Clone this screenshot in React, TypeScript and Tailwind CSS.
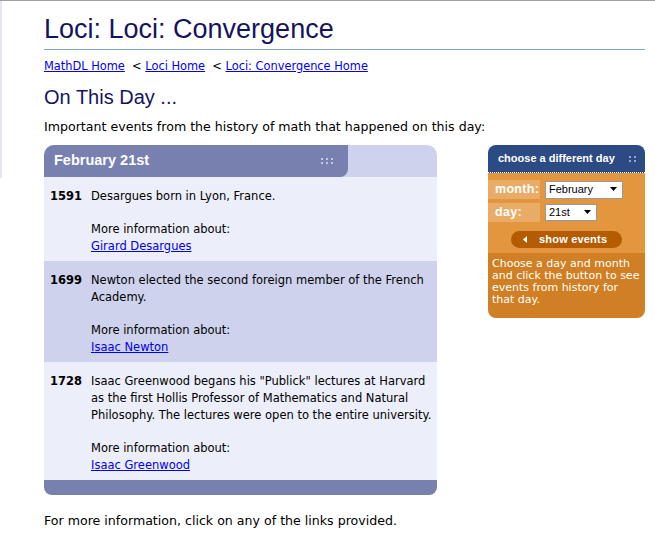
import React from "react";

const body = { fontFamily: '"DejaVu Sans", Verdana, sans-serif' };
const arial = { fontFamily: '"Liberation Sans", Arial, sans-serif' };

function Grip({ color, cols }: { color: string; cols: number[] }) {
  const w = cols[cols.length - 1] + 3;
  return (
    <svg width={w} height="8" viewBox={`0 0 ${w} 8`}>
      {cols.map((x) =>
        [1, 5].map((y) => <rect key={x + "-" + y} x={x} y={y} width="2" height="2" fill={color} />)
      )}
    </svg>
  );
}

type Ev = { year: string; text: string; link: string; dark: boolean };
const events: Ev[] = [
  { year: "1591", text: "Desargues born in Lyon, France.", link: "Girard Desargues", dark: false },
  { year: "1699", text: "Newton elected the second foreign member of the French Academy.", link: "Isaac Newton", dark: true },
  {
    year: "1728",
    text: 'Isaac Greenwood begans his "Publick" lectures at Harvard as the first Hollis Professor of Mathematics and Natural Philosophy. The lectures were open to the entire university.',
    link: "Isaac Greenwood",
    dark: false,
  },
];

export default function App() {
  return (
    <div className="w-[655px] h-[545px] bg-white border-t border-[#a0a0a0] relative overflow-hidden">
      <div className="absolute left-0 top-0 w-[2px] h-[177px] bg-[#e4e6f6]" />
      <div className="pl-[44px] pr-[10px]">
        <h1
          className="text-[27px] leading-[32px] text-[#14145e] pt-[12px] pb-[4px] border-b border-[#7ea4c8]"
          style={arial}
        >
          Loci: Loci: Convergence
        </h1>
        <div className="text-[11.4px] leading-[14px] mt-[9px] text-black" style={body}>
          <a className="text-[#0000ee] underline" href="#">MathDL Home</a>
          <span>&nbsp;&nbsp;&lt; </span>
          <a className="text-[#0000ee] underline" href="#">Loci Home</a>
          <span>&nbsp;&nbsp;&lt; </span>
          <a className="text-[#0000ee] underline" href="#">Loci: Convergence Home</a>
        </div>
        <h2 className="text-[20px] leading-[24px] text-[#14145e] mt-[12px]" style={arial}>
          On This Day ...
        </h2>
        <p className="text-[12.6px] leading-[16px] mt-[10px] text-black" style={body}>
          Important events from the history of math that happened on this day:
        </p>

        <div className="flex items-start mt-[10px]">
          <div className="w-[393px]">
            <div className="flex h-[32px] bg-[#ced2ec] rounded-t-[10px] overflow-hidden">
              <div className="w-[304px] bg-[#7880b0] rounded-br-[8px] flex items-center justify-between pl-[10px] pr-[14px]">
                <span className="text-white font-bold text-[14.5px]" style={arial}>February 21st</span>
                <Grip color="#c4c8e4" cols={[1, 6, 11]} />
              </div>
            </div>
            {events.map((e) => (
              <div
                key={e.year}
                className={`flex text-[11.5px] leading-[17px] text-black pt-[11px] pb-[6px] ${e.dark ? "bg-[#ced2ec]" : "bg-[#eceefa]"}`}
                style={body}
              >
                <div className="w-[47px] pl-[6px] font-bold shrink-0">{e.year}</div>
                <div className="pr-[1px]">
                  <div>{e.text}</div>
                  <div className="h-[16px]" />
                  <div>More information about:</div>
                  <a className="text-[#0000ee] underline" href="#">{e.link}</a>
                </div>
              </div>
            ))}
            <div className="h-[15px] bg-[#7880b0] rounded-b-[8px]" />
          </div>

          <div className="ml-[51px] w-[157px] rounded-[8px] overflow-hidden" style={body}>
            <div className="h-[28px] bg-[#2c4a84] flex items-center justify-between pl-[10px] pr-[8px] border-b border-dotted border-white">
              <span className="text-white font-bold text-[11px] whitespace-nowrap" style={arial}>choose a different day</span>
              <Grip color="#9aaad0" cols={[1, 6]} />
            </div>
            <div className="bg-[#e3963d] pt-[7px] pb-[5px]">
              <div className="flex items-center gap-[5px] mb-[4px]">
                <div className="w-[52px] h-[19px] bg-[#e8ac67] text-white font-bold text-[12.5px] flex items-center pl-[7px] tracking-[0.3px]" style={arial}>month:</div>
                <div className="w-[78px] h-[18px] bg-white border border-[#999] flex items-center justify-between pl-[3px] pr-[4px]">
                  <span className="text-[11px] text-black" style={arial}>February</span>
                  <svg width="9" height="5" viewBox="0 0 9 5"><path d="M1 0h7L4.5 4z" fill="#000" /></svg>
                </div>
              </div>
              <div className="flex items-center gap-[5px]">
                <div className="w-[52px] h-[19px] bg-[#e8ac67] text-white font-bold text-[12.5px] flex items-center pl-[7px] tracking-[0.3px]" style={arial}>day:</div>
                <div className="w-[52px] h-[17px] bg-white border border-[#999] flex items-center justify-between pl-[3px] pr-[4px]">
                  <span className="text-[11px] text-black" style={arial}>21st</span>
                  <svg width="9" height="5" viewBox="0 0 9 5"><path d="M1 0h7L4.5 4z" fill="#000" /></svg>
                </div>
              </div>
              <div className="flex mt-[9px] pl-[23px]">
                <div className="w-[111px] h-[17px] rounded-full bg-[#b45c02] flex items-center pl-[12px] gap-[12px]">
                  <svg width="4" height="7" viewBox="0 0 4 7"><path d="M4 0v7L0 3.5z" fill="#fff" /></svg>
                  <span className="text-white font-bold text-[11px] tracking-[0.2px]" style={arial}>show events</span>
                </div>
              </div>
            </div>
            <div className="bg-[#d07f24] text-white text-[11px] leading-[12px] px-[4px] pt-[5px] pb-[12px]">
              Choose a day and month and click the button to see events from history for that day.
            </div>
          </div>
        </div>

        <p className="text-[12.6px] leading-[16px] mt-[18px] text-black" style={body}>
          For more information, click on any of the links provided.
        </p>
      </div>
    </div>
  );
}
